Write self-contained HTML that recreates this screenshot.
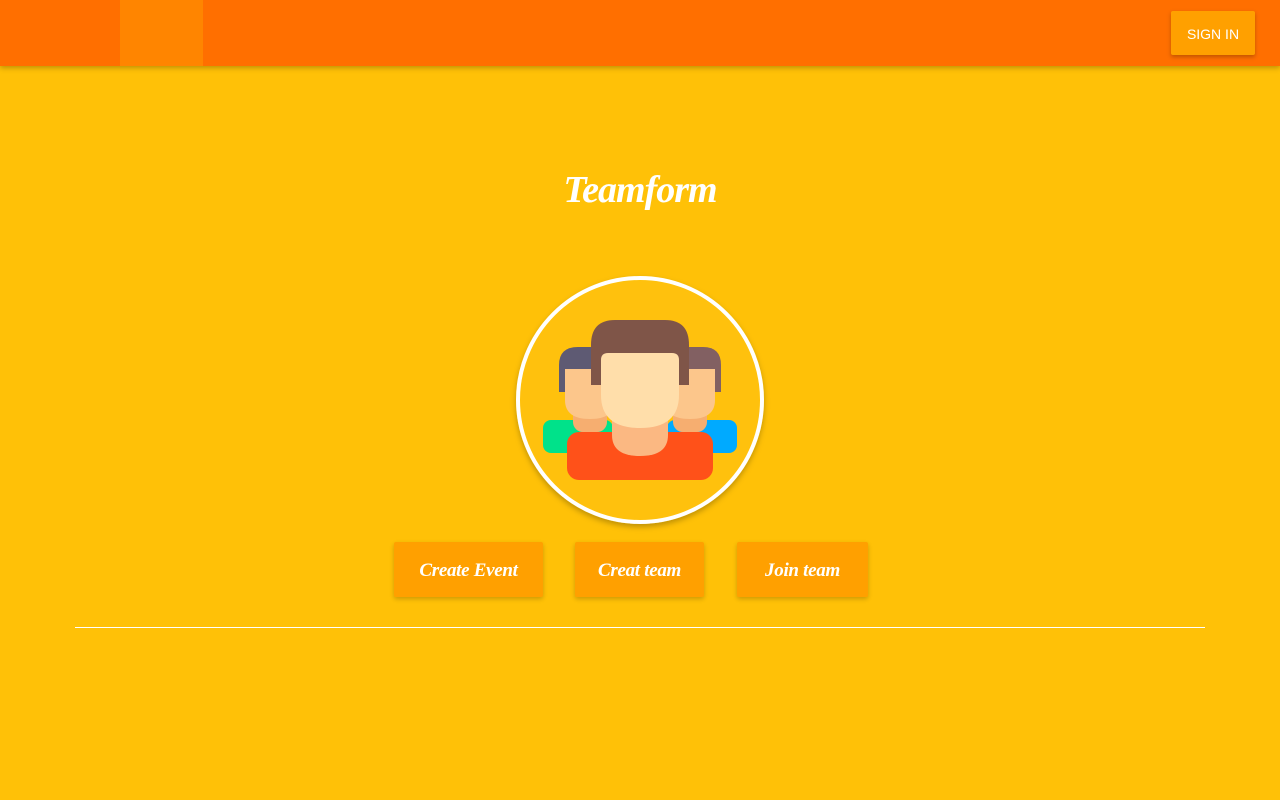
<!DOCTYPE html>
<html><head><style>
body{margin:0;width:1280px;height:800px;background:#ffc107;font-family:"Liberation Sans",sans-serif;overflow:hidden;position:relative}
.nav{position:absolute;left:0;top:0;width:1280px;height:66px;background:#ff6f00;box-shadow:0 2px 5px rgba(0,0,0,.25)}
.tab{position:absolute;left:120px;top:0;width:83px;height:66px;background:#ff8500}
.sign{position:absolute;left:1171px;top:11px;width:84px;height:44px;background:#ffa000;color:#fff;font-size:14px;line-height:46px;text-align:center;box-shadow:0 2px 4px rgba(0,0,0,.25);border-radius:2px}
h1{position:absolute;left:0;width:1280px;top:168px;margin:0;text-align:center;color:#fff;font:italic bold 38px "Liberation Serif",serif;letter-spacing:-1px}
.btn{position:absolute;top:542px;height:55px;background:#ffa000;color:#fff;font:italic bold 19px "Liberation Serif",serif;line-height:57px;text-align:center;border-radius:2px;box-shadow:0 2px 5px rgba(0,0,0,.2);letter-spacing:-.3px}
.hr{position:absolute;left:75px;top:627px;width:1130px;height:1px;background:#fff}
</style></head><body>
<div class="nav"><div class="tab"></div><div class="sign">SIGN IN</div></div>
<h1>Teamform</h1>
<svg style="position:absolute;left:0;top:0" width="1280" height="800">
<defs><filter id="s"><feDropShadow dx="0" dy="3" stdDeviation="3" flood-opacity=".25"/></filter></defs>
<circle cx="640" cy="400" r="122" fill="#ffc107" stroke="#fff" stroke-width="4" filter="url(#s)"/>
<rect x="543" y="420" width="70" height="33" rx="8" fill="#00e28a"/>
<rect x="667" y="420" width="70" height="33" rx="8" fill="#00aaff"/>
<rect x="573" y="400" width="34" height="32" rx="10" fill="#f6ae70"/>
<rect x="673" y="400" width="34" height="32" rx="10" fill="#f6ae70"/>
<path d="M559 392 V365 Q559 347 578 347 H598 Q615 347 615 365 V392 Z" fill="#5e5a73"/>
<path d="M665 392 V365 Q665 347 683 347 H703 Q721 347 721 365 V392 Z" fill="#826062"/>
<path d="M565 369 H615 V400 Q615 419 590 419 Q565 419 565 400 Z" fill="#fcc68b"/>
<path d="M665 369 H715 V400 Q715 419 690 419 Q665 419 665 400 Z" fill="#fcc68b"/>
<rect x="567" y="432" width="146" height="48" rx="12" fill="#ff5119"/>
<path d="M612 410 H668 V435 Q668 456 640 456 Q612 456 612 435 Z" fill="#fbb882"/>
<path d="M591 385 V345 Q591 320 615 320 H665 Q689 320 689 345 V385 Z" fill="#7f5548"/>
<path d="M601 360 Q601 353 608 353 H672 Q679 353 679 360 V395 Q679 428 640 428 Q601 428 601 395 Z" fill="#ffdeaa"/>
</svg>
<div class="btn" style="left:394px;width:149px">Create Event</div>
<div class="btn" style="left:575px;width:129px">Creat team</div>
<div class="btn" style="left:737px;width:131px">Join team</div>
<div class="hr"></div>
</body></html>
